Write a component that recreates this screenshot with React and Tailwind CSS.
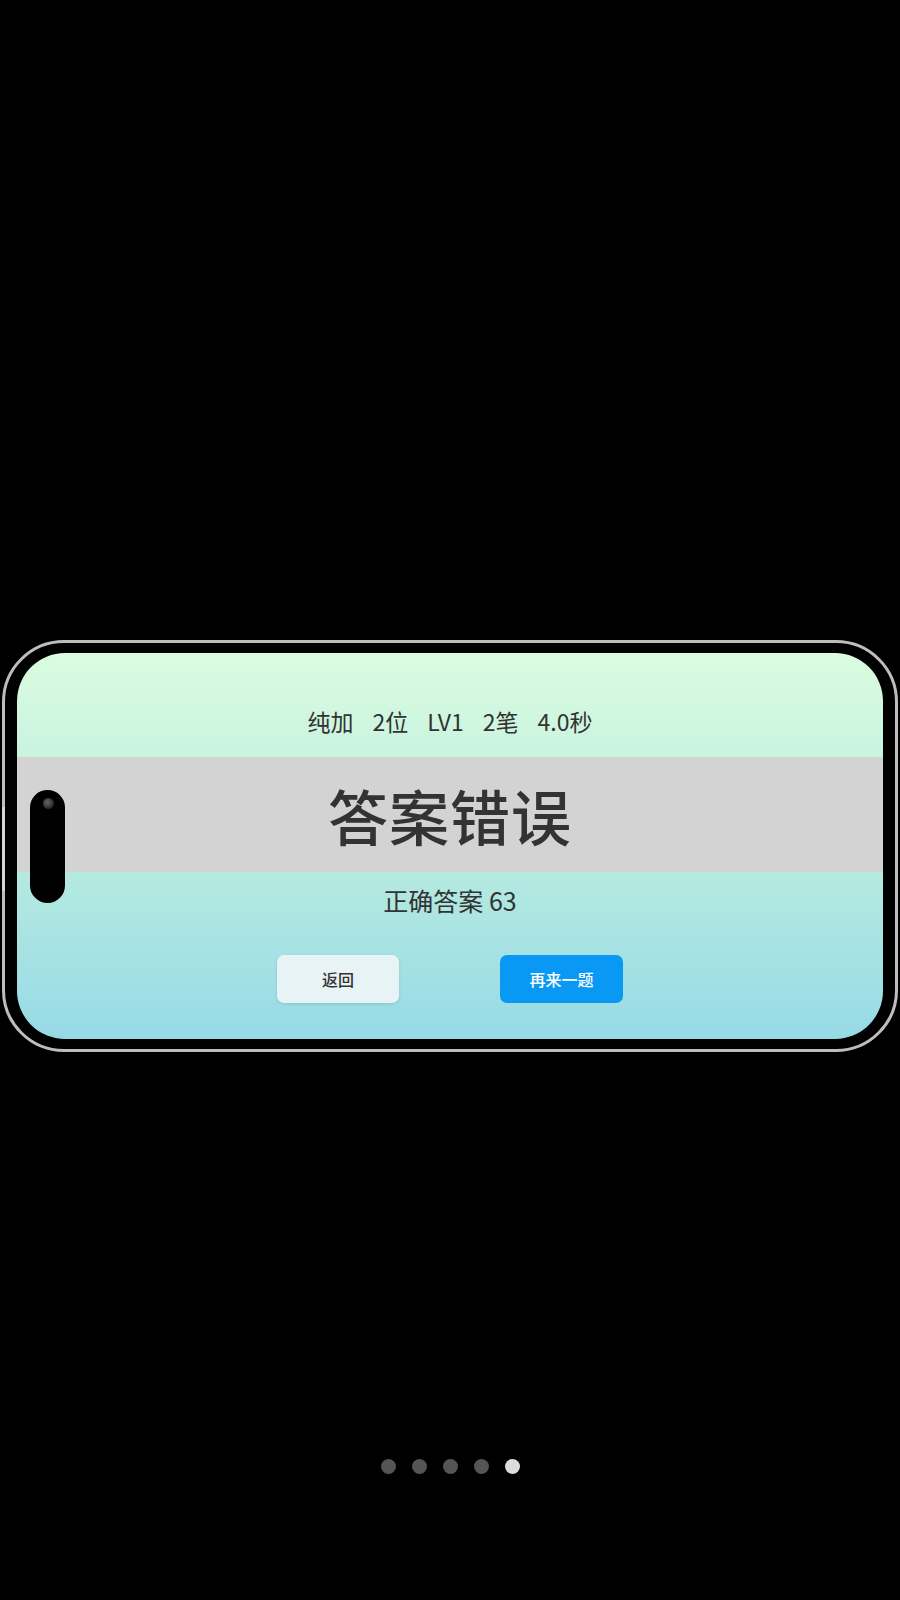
import React from "react";

const font = { fontFamily: '"Noto Sans CJK SC", "Noto Sans", sans-serif' };

const stats = ["纯加", "2位", "LV1", "2笔", "4.0秒"];

const Dots = ({ count, active }) => (
  <div className="flex gap-4 mt-[407px]">
    {Array.from({ length: count }).map((_, i) => (
      <div
        key={i}
        className={`w-[15px] h-[15px] rounded-full ${i === active ? "bg-[#dcdcdc]" : "bg-[#555555]"}`}
      />
    ))}
  </div>
);

const App = () => {
  return (
    <div className="w-[900px] h-[1600px] bg-black flex flex-col items-center" style={font}>
      <div className="relative mt-[640px] w-[896px] h-[412px] rounded-[62px] border-[3px] border-[#bdbdbd] bg-black px-[12px] py-[10px]">
        {/* side button */}
        <div className="absolute -left-[3px] top-[164px] w-[3px] h-[84px] bg-[#d6d6d6]" />

        <div className="h-full rounded-[48px] overflow-hidden bg-linear-to-b from-[#dbfce0] via-[#b9ecdf] to-[#96dae6] flex flex-col">
          <div className="h-[104px] pt-[53px] flex justify-center gap-[19px] text-[23px] leading-[30px] text-[#333333]">
            {stats.map((s) => (
              <span key={s}>{s}</span>
            ))}
          </div>

          <div className="h-[115px] bg-[#d3d3d3] flex items-center justify-center">
            <h1 className="text-[60px] leading-none font-medium text-[#333333] tracking-[1px]">答案错误</h1>
          </div>

          <div className="flex flex-col items-center pt-[11px]">
            <p className="text-[25px] leading-[34px] text-[#333333]">正确答案 63</p>
            <div className="flex gap-[101px] mt-[38px]">
              <button className="w-[122px] h-[48px] rounded-[7px] bg-[#e7f3f5] shadow-[0_1px_3px_rgba(0,0,0,0.12)] text-[16px] font-medium text-[#333333]">
                返回
              </button>
              <button className="w-[123px] h-[48px] rounded-[7px] bg-[#0999f4] text-[16px] font-medium text-white">
                再来一题
              </button>
            </div>
          </div>
        </div>

        {/* camera cutout */}
        <div className="absolute left-[25px] top-[147px] w-[35px] h-[113px] rounded-full bg-black">
          <div className="absolute left-[13px] top-[8px] w-[11px] h-[11px] rounded-full bg-[radial-gradient(circle_at_40%_40%,#666666,#222222_75%)]" />
        </div>
      </div>

      <Dots count={5} active={4} />
    </div>
  );
};

export default App;
